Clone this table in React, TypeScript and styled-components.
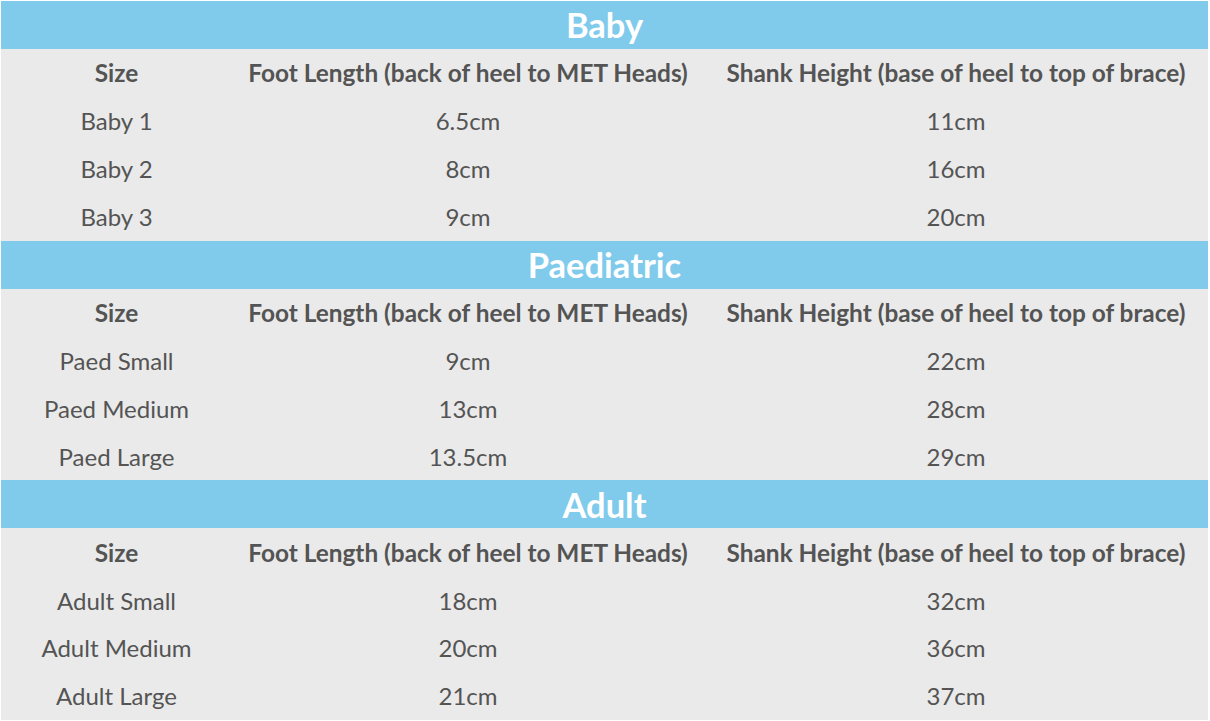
import React from 'react';
import styled, { createGlobalStyle } from 'styled-components';

const GlobalStyle = createGlobalStyle`
    html, body {
        margin: 0;
        padding: 0;
        background: #ffffff;
    }
`;

const Page = styled.div`
    padding: 1px 2px 0 1px;
    font-family: Lato, 'Noto Sans', sans-serif;
    color: #545454;
`;

const Table = styled.div`
    display: grid;
    grid-template-columns: 231px 472px 1fr;
    grid-auto-rows: 47.93px;
    background: #eaeaea;
`;

const Banner = styled.div`
    grid-column: 1 / -1;
    background: #80cbec;
    color: #ffffff;
    font-size: 34.5px;
    font-weight: 700;
    display: flex;
    align-items: center;
    justify-content: center;
`;

const Cell = styled.div<{ $head?: boolean }>`
    display: flex;
    align-items: center;
    justify-content: center;
    font-size: ${(p) => (p.$head ? '24.4px' : '24px')};
    font-weight: ${(p) => (p.$head ? 700 : 400)};
    white-space: nowrap;
`;

interface ISection {
    title: string;
    rows: [string, string, string][];
}

const sections: ISection[] = [
    {
        title: 'Baby',
        rows: [
            ['Baby 1', '6.5cm', '11cm'],
            ['Baby 2', '8cm', '16cm'],
            ['Baby 3', '9cm', '20cm']
        ]
    },
    {
        title: 'Paediatric',
        rows: [
            ['Paed Small', '9cm', '22cm'],
            ['Paed Medium', '13cm', '28cm'],
            ['Paed Large', '13.5cm', '29cm']
        ]
    },
    {
        title: 'Adult',
        rows: [
            ['Adult Small', '18cm', '32cm'],
            ['Adult Medium', '20cm', '36cm'],
            ['Adult Large', '21cm', '37cm']
        ]
    }
];

const headings = [
    'Size',
    'Foot Length (back of heel to MET Heads)',
    'Shank Height (base of heel to top of brace)'
];

const App = (): JSX.Element => {
    return (
        <Page>
            <GlobalStyle />
            <Table>
                {sections.map((section) => (
                    <React.Fragment key={section.title}>
                        <Banner>{section.title}</Banner>
                        {headings.map((h) => (
                            <Cell $head key={h}>
                                {h}
                            </Cell>
                        ))}
                        {section.rows.map((row) =>
                            row.map((value, i) => (
                                <Cell key={row[0] + i}>{value}</Cell>
                            ))
                        )}
                    </React.Fragment>
                ))}
            </Table>
        </Page>
    );
};

export default App;
